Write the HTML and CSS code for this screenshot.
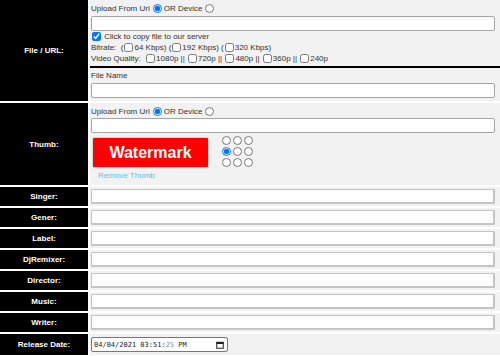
FILE: index.html
```html
<!DOCTYPE html>
<html lang="en">
<head>
  <meta charset="UTF-8" />
  <meta name="viewport" content="width=device-width, initial-scale=1.0" />
  <title>Add Song</title>
  <link rel="stylesheet" href="styles.css">
</head>
<body>

  <table class="form-table">
    <tr>
      <td class="lbl">File / URL:</td>
      <td class="val file-cell">
        <div class="line">Upload From Url<input type="radio" name="src" checked>OR Device<input type="radio" name="src"></div>
        <input type="text" class="field url-field">
        <div class="line"><input type="checkbox" class="first-check" checked> Click to copy file to our server</div>
        <div class="line">Bitrate:&nbsp;&nbsp;(<input type="checkbox">64 Kbps) (<input type="checkbox">192 Kbps) (<input type="checkbox">320 Kbps)</div>
        <div class="line">Video Quality:&nbsp;&nbsp;<input type="checkbox">1080p || <input type="checkbox">720p || <input type="checkbox">480p || <input type="checkbox">360p || <input type="checkbox">240p</div>
        <div class="divider"></div>
        <div class="line name-line">File Name</div>
        <input type="text" class="field url-field">
      </td>
    </tr>
    <tr>
      <td class="lbl">Thumb:</td>
      <td class="val thumb-cell">
        <div class="line">Upload From Url<input type="radio" name="thumb" checked>OR Device<input type="radio" name="thumb"></div>
        <input type="text" class="field url-field">
        <div class="thumb-row">
          <div class="watermark">Watermark</div>
          <div class="pos-grid">
            <input type="radio" name="pos">
            <input type="radio" name="pos">
            <input type="radio" name="pos">
            <input type="radio" name="pos" checked>
            <input type="radio" name="pos">
            <input type="radio" name="pos">
            <input type="radio" name="pos">
            <input type="radio" name="pos">
            <input type="radio" name="pos">
          </div>
        </div>
        <a href="#" class="remove-link">Remove Thumb</a>
      </td>
    </tr>
    <tr><td class="lbl">Singer:</td><td class="val"><input type="text" class="field"></td></tr>
    <tr><td class="lbl">Gener:</td><td class="val"><input type="text" class="field"></td></tr>
    <tr><td class="lbl">Label:</td><td class="val"><input type="text" class="field"></td></tr>
    <tr><td class="lbl">DjRemixer:</td><td class="val"><input type="text" class="field"></td></tr>
    <tr><td class="lbl">Director:</td><td class="val"><input type="text" class="field"></td></tr>
    <tr><td class="lbl">Music:</td><td class="val"><input type="text" class="field"></td></tr>
    <tr><td class="lbl">Writer:</td><td class="val"><input type="text" class="field"></td></tr>
    <tr>
      <td class="lbl">Release Date:</td>
      <td class="val date-cell">
        <div class="date-field">
          <span>04/04/2021 03:51:<span class="sec">25</span> PM</span>
          <svg width="8" height="8" viewBox="0 0 8 8">
            <rect x="0.75" y="1.25" width="6.5" height="6" fill="none" stroke="#222" stroke-width="1"/>
            <rect x="0.5" y="1" width="7" height="2" fill="#222"/>
          </svg>
        </div>
      </td>
    </tr>
    <tr><td class="lbl"></td><td class="val"></td></tr>
  </table>

</body>
</html>
```

FILE: styles.css
```css
body {
  margin: 0;
  font-family: 'Liberation Sans', Arial, sans-serif;
  font-size: 8px;
  color: #333;
  background: #fff;
}

.form-table {
  width: 100%;
  border-collapse: separate;
  border-spacing: 0;
}

.form-table td {
  border-bottom: 2px solid #fff;
  padding: 0;
}

.lbl {
  width: 88px;
  background: #000;
  color: #fff;
  font-weight: bold;
  text-align: center;
  border-right: 2px solid #fff;
}

.form-table .val {
  background: #f2f2f2;
  padding: 2px 5px 2px 1px;
  height: 15px;
}

.line {
  height: 11px;
  line-height: 11px;
  white-space: nowrap;
}

.line input[type="radio"] {
  width: 9px;
  height: 9px;
  margin: 0 2px 0 3px;
  vertical-align: -2px;
}

.line input[type="checkbox"] {
  width: 9px;
  height: 9px;
  margin: 0 1px;
  vertical-align: -2px;
}

.line .first-check {
  margin-left: 2px;
}

.field {
  display: block;
  box-sizing: border-box;
  width: 100%;
  height: 15px;
  margin: 0;
  border: 1px solid #c4c4c4;
  border-bottom-width: 2px;
  border-right-width: 2px;
  border-radius: 1px;
  background: #fff;
  font-size: 8px;
}

.url-field {
  border: 1px solid #a5a5a5;
  border-radius: 2px;
  margin-top: 2px;
}

.form-table .file-cell {
  padding-top: 3px;
  padding-bottom: 3px;
}

.divider {
  height: 2px;
  background: #000;
  margin: 2px -5px 3px -1px;
}

.name-line {
  height: 10px;
  line-height: 10px;
}

.form-table .thumb-cell {
  padding-top: 3px;
  padding-bottom: 3px;
}

.thumb-cell .url-field {
  margin-top: 1px;
}

.thumb-row {
  display: flex;
  align-items: center;
  gap: 13px;
  margin-top: 4px;
  padding-left: 1px;
}

.watermark {
  width: 115px;
  height: 29px;
  background: #ff0000;
  border: 1px solid #d8d8d8;
  border-radius: 2px;
  color: #fff;
  font-weight: bold;
  font-size: 16px;
  display: flex;
  align-items: center;
  justify-content: center;
}

.pos-grid {
  display: grid;
  grid-template-columns: repeat(3, 9px);
  gap: 2px;
  margin-top: -3px;
}

.pos-grid input {
  width: 9px;
  height: 9px;
  margin: 0;
}

.remove-link {
  display: block;
  margin: 3px 0 1px 7px;
  color: #4cc6f0;
  text-decoration: none;
  line-height: 10px;
}

.form-table .date-cell {
  padding-top: 3px;
  padding-bottom: 3px;
}

.date-field {
  box-sizing: border-box;
  width: 137px;
  height: 15px;
  padding: 0 3px 0 2px;
  border: 1px solid #777;
  border-radius: 2px;
  background: #fff;
  font-family: 'DejaVu Sans Mono', monospace;
  font-size: 7px;
  color: #222;
  display: flex;
  align-items: center;
  justify-content: space-between;
}

.date-field .sec {
  color: #7a9cc6;
}
```
